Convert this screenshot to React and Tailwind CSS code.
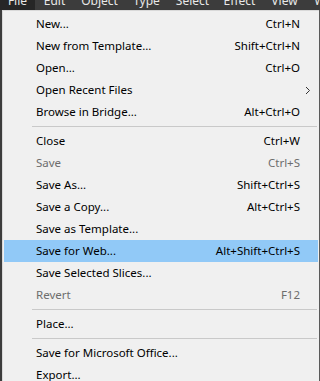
import React from 'react';

const menuBar = [
  { label: 'File', w: 'w-[35px]', active: true },
  { label: 'Edit', w: 'w-[39px]' },
  { label: 'Object', w: 'w-[51px]' },
  { label: 'Type', w: 'w-[43px]' },
  { label: 'Select', w: 'w-[49px]' },
  { label: 'Effect', w: 'w-[45px]' },
  { label: 'View', w: 'w-[45px]' },
  { label: 'Window', w: 'w-[60px]' },
];

const items = [
  { label: 'New...', key: 'Ctrl+N' },
  { label: 'New from Template...', key: 'Shift+Ctrl+N' },
  { label: 'Open...', key: 'Ctrl+O' },
  { label: 'Open Recent Files', sub: true },
  { label: 'Browse in Bridge...', key: 'Alt+Ctrl+O' },
  { sep: true },
  { label: 'Close', key: 'Ctrl+W' },
  { label: 'Save', key: 'Ctrl+S', disabled: true },
  { label: 'Save As...', key: 'Shift+Ctrl+S' },
  { label: 'Save a Copy...', key: 'Alt+Ctrl+S' },
  { label: 'Save as Template...' },
  { label: 'Save for Web...', key: 'Alt+Shift+Ctrl+S', active: true },
  { label: 'Save Selected Slices...' },
  { label: 'Revert', key: 'F12', disabled: true },
  { sep: true },
  { label: 'Place...' },
  { sep: true },
  { label: 'Save for Microsoft Office...' },
  { label: 'Export...' },
];

function App() {
  return (
    <div
      className="w-[320px] h-[381px] overflow-hidden bg-[#3c3c3c] flex flex-col"
      style={{ fontFamily: '"Noto Sans", "Liberation Sans", sans-serif' }}
    >
      {/* menu bar, only its lower edge is in view */}
      <div className="h-[10px] shrink-0 flex overflow-hidden">
        {menuBar.map((m) => (
          <div
            key={m.label}
            className={`${m.w} shrink-0 h-[10px] flex justify-center ${m.active ? 'bg-[#262626]' : ''}`}
          >
            <span className="-mt-[9px] h-[20px] leading-[20px] text-[12px] text-[#e8e8e8]">{m.label}</span>
          </div>
        ))}
      </div>

      {/* dropdown */}
      <div className="flex flex-1">
        <div className="w-[2px] shrink-0" />
        <div className="w-[317px] shrink-0 bg-[#f0f0f0] border-l border-t border-[#d9d9d9] pt-[2px] px-[1px]">
          {items.map((it, i) =>
            it.sep ? (
              <div key={i} className="h-[7px] flex items-center pl-[28px] pr-[1px]">
                <div className="h-px w-full bg-[#c9c9c9]" />
              </div>
            ) : (
              <div
                key={i}
                className={`h-[22px] flex items-center pl-[32px] pr-[18px] text-[11.5px] ${
                  it.active ? 'bg-[#91c9f7]' : ''
                } ${it.disabled ? 'text-[#6d6d6d]' : 'text-black'}`}
              >
                <span className="flex-1">{it.label}</span>
                {it.key && <span>{it.key}</span>}
                {it.sub && (
                  <svg width="6" height="9" viewBox="0 0 6 9" className="mr-[-11px]">
                    <path d="M1 1 L4.5 4.5 L1 8" fill="none" stroke="#333" strokeWidth="1" />
                  </svg>
                )}
              </div>
            )
          )}
        </div>
        <div className="w-px shrink-0 bg-[#5a5a5a]" />
      </div>
    </div>
  );
}

export default App;
